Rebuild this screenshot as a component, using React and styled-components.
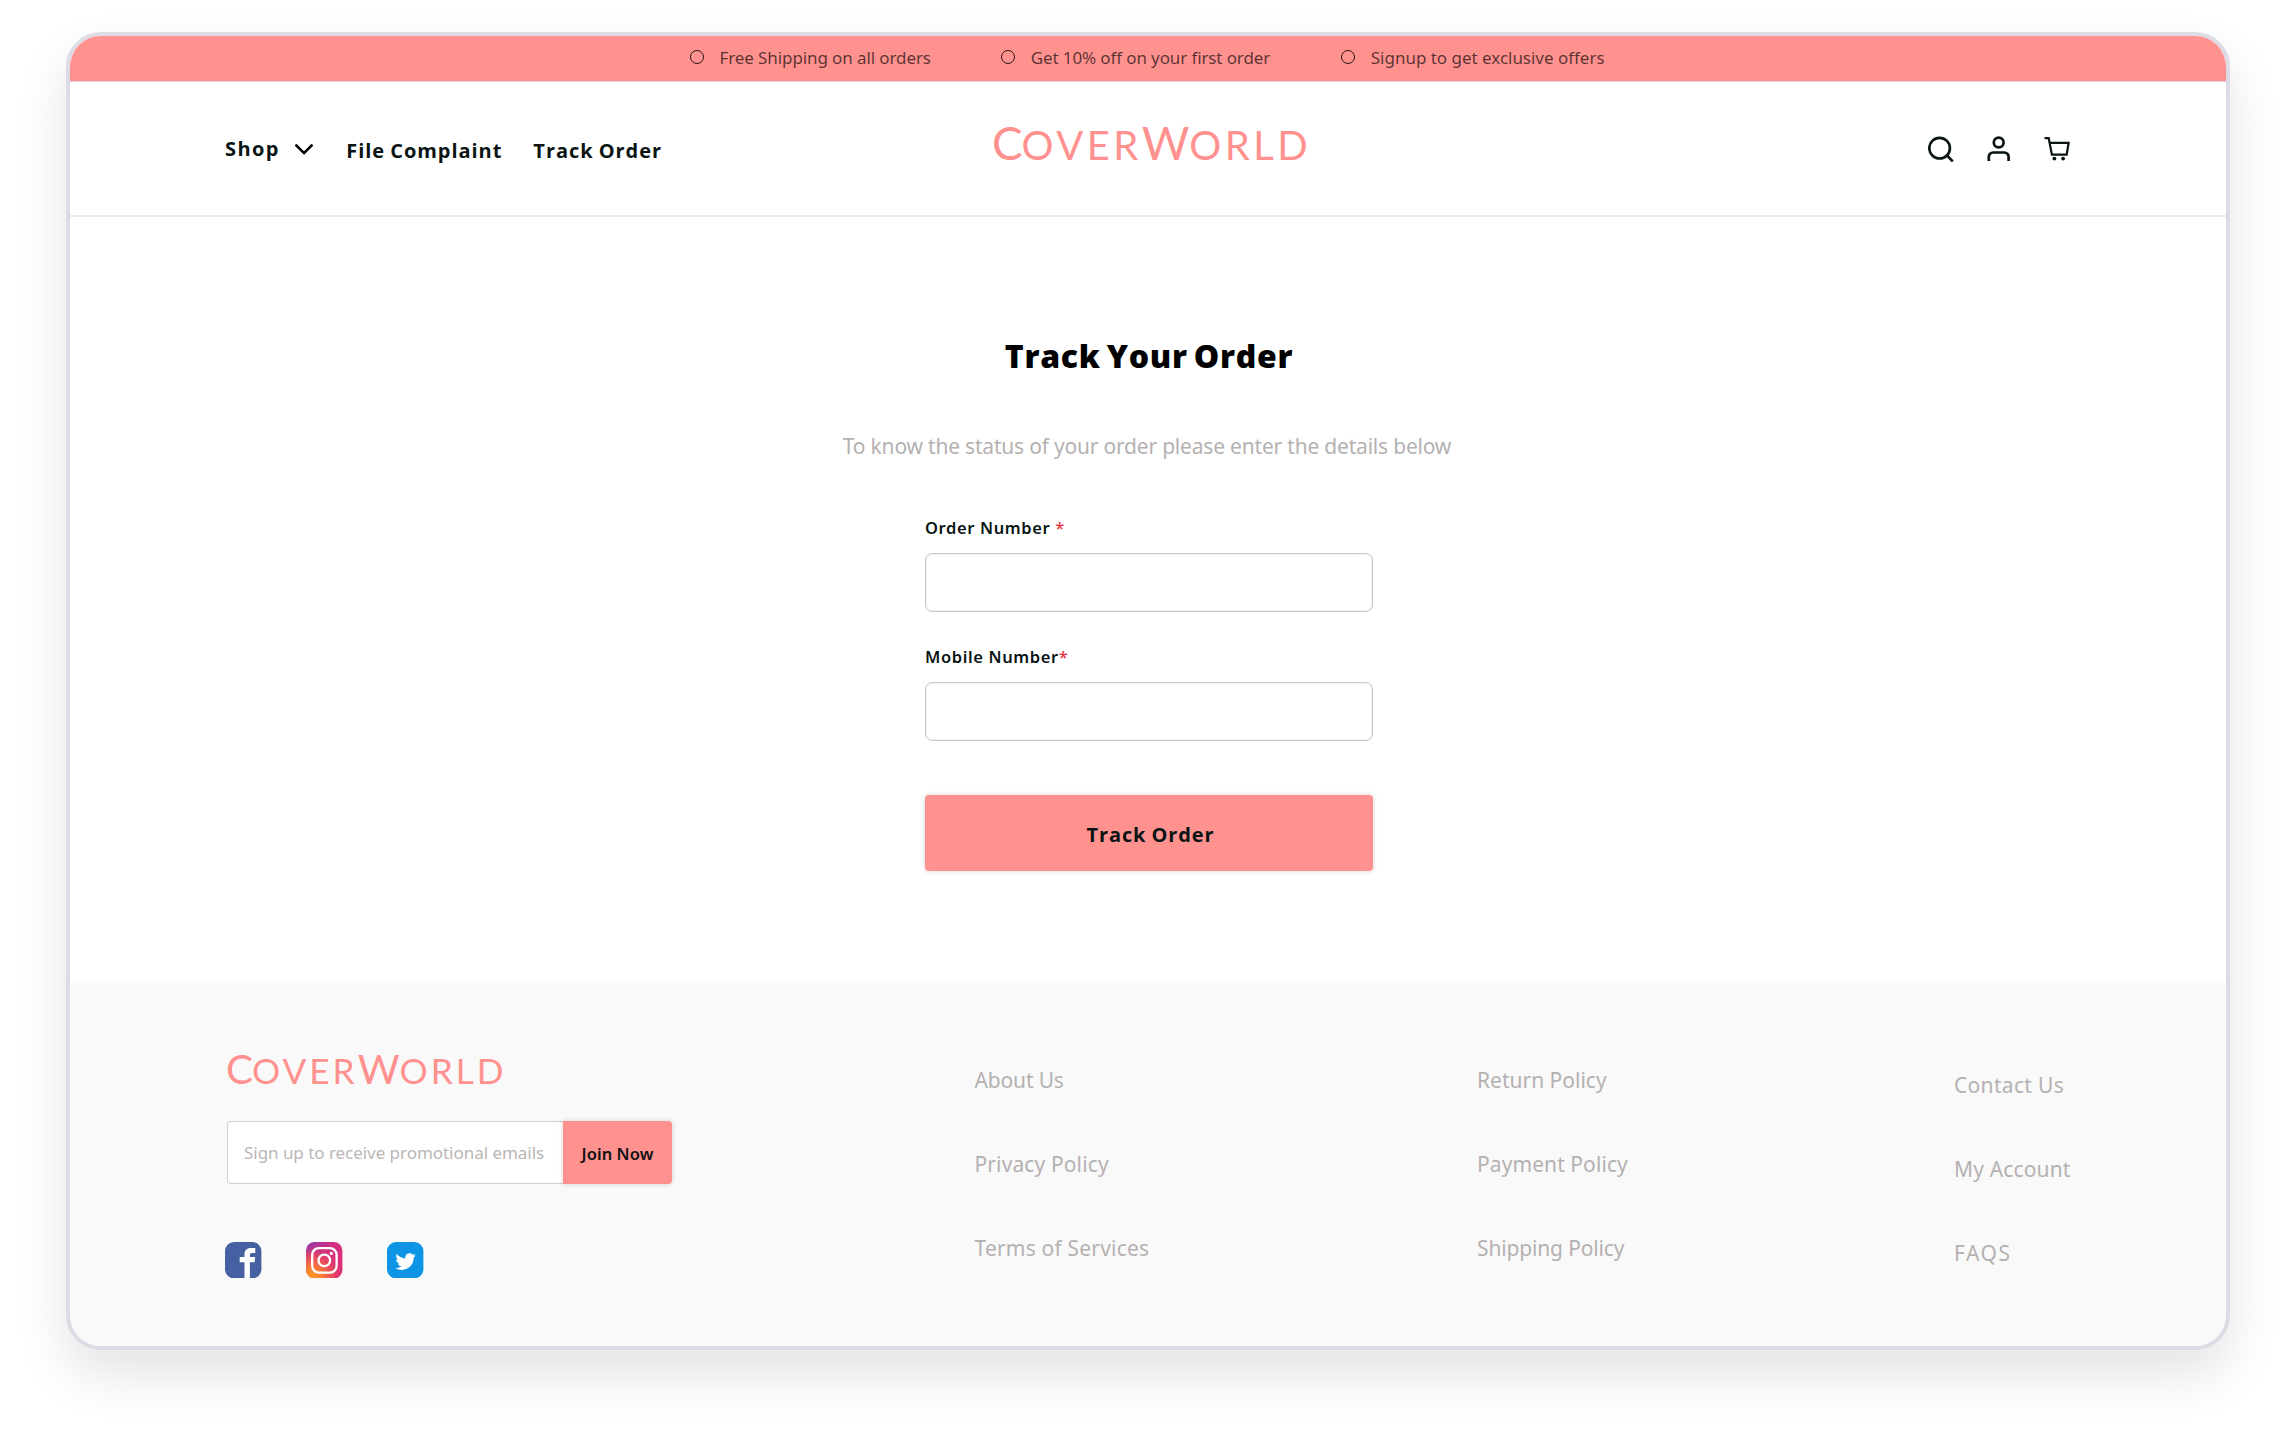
import React from 'react';
import styled, { createGlobalStyle } from 'styled-components';

const coral = '#ff918f';
const sans = '"Noto Sans", "Open Sans", sans-serif';
const display = '"Open Sans", "Noto Sans", sans-serif';

const GlobalStyle = createGlobalStyle`
  * { box-sizing: border-box; }
  body {
    margin: 0;
    background: #fff;
    font-family: ${sans};
    color: #0a1413;
  }
  input, button { font-family: inherit; }
`;

const Page = styled.div`
  width: 2292px;
  height: 1447px;
  padding: 32px 62px 97px 66px;
  overflow: hidden;
`;

const Window = styled.div`
  display: flex;
  flex-direction: column;
  height: 1318px;
  border: 4px solid #dddbe3;
  border-radius: 35px;
  overflow: hidden;
  background: #fff;
  box-shadow: 0 25px 52px rgba(0, 0, 0, 0.11);
`;

const PromoBar = styled.ul`
  display: grid;
  grid-template-columns: 311.3px 340px auto;
  justify-content: start;
  align-items: center;
  height: 46px;
  margin: 0;
  padding: 0 0 2px 619.5px;
  list-style: none;
  background: ${coral};
  border-bottom: 1px solid #dcd3d6;
`;

const Promo = styled.li`
  display: flex;
  align-items: center;
  gap: 16px;
  font-size: 17px;
  font-weight: 400;
  line-height: 24px;
  letter-spacing: ${(p) => p.$ls || 0}px;
  color: rgba(0, 0, 0, 0.66);
  white-space: nowrap;

  &::before {
    content: '';
    width: 12px;
    height: 12px;
    border: 1px solid rgba(0, 0, 0, 0.85);
    border-radius: 50%;
    margin-top: -2px;
  }
`;

const Header = styled.header`
  display: grid;
  grid-template-columns: 1fr auto 1fr;
  align-items: center;
  height: 135px;
  padding: 0 156px 0 155px;
  border-bottom: 2px solid #ececec;
`;

const Nav = styled.nav`
  display: flex;
  align-items: center;
  gap: 31px;
  padding-top: 4px;
`;

const NavLink = styled.a`
  display: flex;
  align-items: center;
  gap: 15px;
  margin-right: ${(p) => (p.$menu ? 2.5 : 0)}px;
  padding-bottom: ${(p) => (p.$menu ? 3 : 0)}px;
  font-family: ${display};
  font-size: 20px;
  font-weight: 700;
  line-height: 28px;
  letter-spacing: ${(p) => (p.$menu ? 1.4 : 0.95)}px;
  word-spacing: -1px;
  white-space: nowrap;
`;

const Logo = styled.div`
  font-family: Lato, sans-serif;
  font-size: ${(p) => p.$size}px;
  line-height: 44px;
  color: ${coral};
  letter-spacing: 0.085em;
  white-space: nowrap;
`;

const Initial = styled.span`
  font-size: 1.15em;
  line-height: 0;
  letter-spacing: ${(p) => p.$ls || 0}em;
`;

const LogoSlot = styled.div`
  padding: 0 0 8px 8px;
`;

const Actions = styled.div`
  display: flex;
  justify-content: flex-end;
  align-items: center;
  gap: 33px;
  padding-top: 1px;

  svg { display: block; }
`;

const Main = styled.main`
  display: flex;
  flex-direction: column;
  align-items: center;
  height: 766px;
  padding: 117px 0 0 2px;
`;

const Title = styled.h1`
  margin: 0;
  font-family: ${display};
  font-size: 32px;
  font-weight: 800;
  line-height: 44px;
  letter-spacing: 0.72px;
  word-spacing: -3px;
  color: #000;
`;

const Hint = styled.p`
  margin: 53px 4px 55px 0;
  font-size: 21px;
  font-weight: 400;
  line-height: 30px;
  letter-spacing: -0.2px;
  color: #b5b1b1;
`;

const Form = styled.form`
  display: flex;
  flex-direction: column;
  width: 448px;
`;

const Field = styled.label`
  display: flex;
  flex-direction: column;
  gap: 13px;
  margin-bottom: ${(p) => p.$after}px;
  font-size: 16.5px;
  font-weight: 600;
  line-height: 24px;
  letter-spacing: 0.62px;
`;

const Star = styled.span`
  color: #e5343d;
  font-weight: 500;
`;

const Input = styled.input`
  width: 100%;
  height: 58.5px;
  padding: 0 16px;
  border: 1px solid #c9c9c9;
  border-radius: 7px;
  background: #fff;
  box-shadow: inset 0 0 0 1px #f0f0f0;
`;

const Submit = styled.button`
  height: 76px;
  border: 0;
  border-radius: 4px;
  background: ${coral};
  box-shadow: 0 0 5px rgba(0, 0, 0, 0.18);
  font-family: ${display};
  font-size: 20px;
  font-weight: 700;
  letter-spacing: 0.9px;
  word-spacing: -1px;
  color: #0a1413;
  padding: 3px 0 0 3px;
`;

const Footer = styled.footer`
  display: grid;
  grid-template-columns: 748.5px 502.5px 477px auto;
  justify-content: start;
  flex: 1;
  padding: 65px 0 0 156px;
  background: #f9f9f9;
`;

const Brand = styled.div`
  display: flex;
  flex-direction: column;
  align-items: flex-start;
`;

const Subscribe = styled.form`
  display: flex;
  align-items: stretch;
  width: 445px;
  height: 63px;
  margin: 28.5px 0 58px 1px;
`;

const EmailInput = styled.input`
  flex: 1;
  min-width: 0;
  padding: 0 0 0 16px;
  border: 1px solid #cfcfcf;
  border-right: 0;
  border-radius: 4px 0 0 4px;
  background: #fff;
  font-size: 17px;
  font-weight: 400;
  letter-spacing: -0.04px;

  &::placeholder { color: #bab6b6; opacity: 1; }
`;

const JoinButton = styled.button`
  width: 109px;
  padding: 2px 0 0;
  border: 0;
  border-radius: 0 4px 4px 0;
  background: ${coral};
  box-shadow: 0 0 5px rgba(0, 0, 0, 0.18);
  font-size: 16.5px;
  font-weight: 600;
  letter-spacing: 0.05px;
  color: #111;
`;

const Socials = styled.div`
  display: flex;
  gap: 44.6px;
  margin-left: -0.6px;

  svg { display: block; }
`;

const Links = styled.nav`
  display: flex;
  flex-direction: column;
  gap: 54.3px;
  padding-top: ${(p) => (p.$low ? 21.5 : 16.7)}px;
`;

const FooterLink = styled.a`
  font-size: 21px;
  font-weight: 400;
  line-height: 30px;
  letter-spacing: ${(p) => p.$ls || 0}px;
  color: #b5b1b1;
  white-space: nowrap;
`;

const Wordmark = ({ size }) => (
  <Logo $size={size}>
    <Initial $ls={-0.025}>C</Initial>OVER<Initial>W</Initial>ORLD
  </Logo>
);

const Chevron = () => (
  <svg width="18" height="11" viewBox="0 0 18 11" fill="none" stroke="#0a0a0a" strokeWidth="2.6" strokeLinecap="round" strokeLinejoin="round">
    <path d="M1.4 1.5 9 9.2l7.6-7.7" />
  </svg>
);

const SearchIcon = () => (
  <svg width="26" height="26" viewBox="0 0 26 26" fill="none" stroke="#0a1413" strokeWidth="2.7">
    <circle cx="11.6" cy="12.2" r="10.3" />
    <path d="M18.8 19.4l6 6" />
  </svg>
);

const UserIcon = () => (
  <svg width="24" height="26" viewBox="0 0 24 26" fill="none" stroke="#0a1413" strokeWidth="2.7">
    <circle cx="11.7" cy="6.5" r="4.9" />
    <path d="M1.8 25v-4.2a4.3 4.3 0 0 1 4.3-4.3h11.2a4.3 4.3 0 0 1 4.3 4.3V25" />
  </svg>
);

const CartIcon = () => (
  <svg width="26" height="26" viewBox="0 0 26 26" fill="none" stroke="#0a1413" strokeWidth="2.2">
    <path d="M.5 2.2h4.2L7.9 18.6h14.8l1.9-11.7H5.8" />
    <circle cx="10.4" cy="22.6" r="1.9" fill="#0a1413" stroke="none" />
    <circle cx="19.1" cy="22.6" r="1.9" fill="#0a1413" stroke="none" />
  </svg>
);

const Facebook = () => (
  <svg width="36.4" height="36.4" viewBox="0 0 36.4 36.4">
    <rect width="36.4" height="36.4" rx="9" fill="#4661a1" />
    <path fill="#fff" d="M19.5 36.4V20.3h-4.8V15h4.8v-2.8c0-3.8 2.3-6.2 6.1-6.2h4.7v4.9h-2.9c-1.9 0-2.5.8-2.5 2.4V15h5.3l-.6 5.3h-4.7v16.1z" />
  </svg>
);

const Instagram = () => (
  <svg width="36.4" height="36.4" viewBox="0 0 36.4 36.4">
    <defs>
      <linearGradient id="igBase" x1="0" y1="0" x2="1" y2="0.5">
        <stop offset="0" stopColor="#8a3ab0" />
        <stop offset="0.5" stopColor="#cb2f86" />
        <stop offset="1" stopColor="#dd2f7c" />
      </linearGradient>
      <radialGradient id="igWarm" cx="0.15" cy="1" r="0.95">
        <stop offset="0" stopColor="#ff9d1c" />
        <stop offset="0.3" stopColor="#fb7f35" />
        <stop offset="0.65" stopColor="#e84a5c" stopOpacity="0.85" />
        <stop offset="1" stopColor="#d93175" stopOpacity="0" />
      </radialGradient>
    </defs>
    <rect width="36.4" height="36.4" rx="8.5" fill="url(#igBase)" />
    <rect width="36.4" height="36.4" rx="8.5" fill="url(#igWarm)" />
    <g fill="none" stroke="#fff" strokeWidth="2.3">
      <rect x="6.2" y="6.2" width="24.4" height="24.4" rx="6.6" />
      <circle cx="18.3" cy="18.4" r="5.8" />
    </g>
    <circle cx="25.3" cy="11.4" r="1.6" fill="#fff" />
  </svg>
);

const Twitter = () => (
  <svg width="36.4" height="36.4" viewBox="0 0 36.4 36.4">
    <rect width="36.4" height="36.4" rx="9" fill="#0d94e5" />
    <path
      fill="#fff"
      transform="translate(8.4 9.4) scale(.85)"
      d="M23.953 4.57a10 10 0 01-2.825.775 4.958 4.958 0 002.163-2.723c-.951.555-2.005.959-3.127 1.184a4.92 4.92 0 00-8.384 4.482C7.69 8.095 4.067 6.13 1.64 3.162a4.822 4.822 0 00-.666 2.475c0 1.71.87 3.213 2.188 4.096a4.904 4.904 0 01-2.228-.616v.06a4.923 4.923 0 003.946 4.827 4.996 4.996 0 01-2.212.085 4.936 4.936 0 004.604 3.417 9.867 9.867 0 01-6.102 2.105c-.39 0-.779-.023-1.17-.067a13.995 13.995 0 007.557 2.209c9.053 0 13.998-7.496 13.998-13.985 0-.21 0-.42-.015-.63A9.935 9.935 0 0024 4.59z"
    />
  </svg>
);

const promos = [
  { text: 'Free Shipping on all orders', ls: -0.1 },
  { text: 'Get 10% off on your first order', ls: -0.12 },
  { text: 'Signup to get exclusive offers', ls: -0.02 },
];

const linkColumns = [
  [
    { text: 'About Us', ls: -0.15 },
    { text: 'Privacy Policy', ls: 0.12 },
    { text: 'Terms of Services', ls: 0.2 },
  ],
  [
    { text: 'Return Policy' },
    { text: 'Payment Policy', ls: 0.08 },
    { text: 'Shipping Policy', ls: -0.15 },
  ],
  [
    { text: 'Contact Us', ls: 0.32 },
    { text: 'My Account', ls: 0.15 },
    { text: 'FAQS', ls: 1.5 },
  ],
];

export default function App() {
  return (
    <Page>
      <GlobalStyle />
      <Window>
        <PromoBar>
          {promos.map((p) => (
            <Promo key={p.text} $ls={p.ls}>{p.text}</Promo>
          ))}
        </PromoBar>

        <Header>
          <Nav>
            <NavLink $menu>Shop <Chevron /></NavLink>
            <NavLink>File Complaint</NavLink>
            <NavLink>Track Order</NavLink>
          </Nav>
          <LogoSlot><Wordmark size={40} /></LogoSlot>
          <Actions>
            <SearchIcon />
            <UserIcon />
            <CartIcon />
          </Actions>
        </Header>

        <Main>
          <Title>Track Your Order</Title>
          <Hint>To know the status of your order please enter the details below</Hint>
          <Form>
            <Field $after={33.5}>
              <span>Order Number <Star>*</Star></span>
              <Input />
            </Field>
            <Field $after={54}>
              <span>Mobile Number<Star>*</Star></span>
              <Input />
            </Field>
            <Submit type="button">Track Order</Submit>
          </Form>
        </Main>

        <Footer>
          <Brand>
            <Wordmark size={35.2} />
            <Subscribe>
              <EmailInput placeholder="Sign up to receive promotional emails" />
              <JoinButton type="button">Join Now</JoinButton>
            </Subscribe>
            <Socials>
              <Facebook />
              <Instagram />
              <Twitter />
            </Socials>
          </Brand>
          {linkColumns.map((links, i) => (
            <Links key={i} $low={i === 2}>
              {links.map((l) => (
                <FooterLink key={l.text} $ls={l.ls}>{l.text}</FooterLink>
              ))}
            </Links>
          ))}
        </Footer>
      </Window>
    </Page>
  );
}
